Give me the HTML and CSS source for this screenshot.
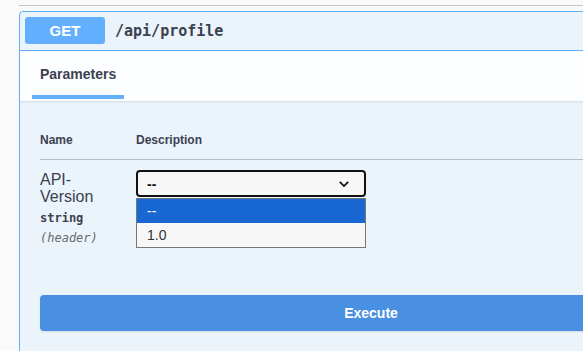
FILE: index.html
```html
<!DOCTYPE html>
<html lang="en">

<head>
    <meta charset="UTF-8">
    <meta name="viewport" content="width=device-width, initial-scale=1.0">
    <title>Profile API</title>
    <link rel="stylesheet" href="styles.css">
</head>

<body>
    <div class="top-rule"></div>

    <div class="opblock">
        <div class="opblock-summary">
            <span class="method">GET</span>
            <span class="path">/api/profile</span>
        </div>

        <div class="section-header">
            <div class="tab">Parameters</div>
        </div>

        <div class="section-body">
            <div class="param-table">
                <div class="param-head">
                    <div class="col-name">Name</div>
                    <div class="col-desc">Description</div>
                </div>
                <div class="param-row">
                    <div class="col-name">
                        <div class="param-name">API-<br>Version</div>
                        <div class="param-type">string</div>
                        <div class="param-in">(header)</div>
                    </div>
                    <div class="col-desc">
                        <div class="select-wrap">
                            <div class="select">
                                <span>--</span>
                                <svg class="chevron" width="12" height="8" viewBox="0 0 12 8">
                                    <path d="M1.8 1.8 L6 6 L10.2 1.8" fill="none" stroke="#111" stroke-width="1.7" />
                                </svg>
                            </div>
                            <!-- open option list -->
                            <ul class="options">
                                <li class="selected">--</li>
                                <li>1.0</li>
                            </ul>
                        </div>
                    </div>
                </div>
            </div>

            <div class="execute-wrapper">
                <button class="btn-execute">Execute</button>
            </div>
        </div>
    </div>
</body>

</html>
```

FILE: styles.css
```css
html,
body {
    margin: 0;
    overflow: hidden;
}

body {
    background-color: #fafafa;
    font-family: "Liberation Sans", Arial, sans-serif;
    color: #3b4151;
}

.top-rule {
    margin-left: 19px;
    height: 5px;
    border-bottom: 1px solid #c4c4c4;
}

.opblock {
    margin: 5px 0 0 19px;
    width: 702px;
    border: 1px solid #61affe;
    border-radius: 4px;
    background-color: #ebf3fb;
}

.opblock-summary {
    display: flex;
    align-items: center;
    padding: 5px 5px 6px;
    border-bottom: 1px solid #61affe;
}

.method {
    width: 80px;
    height: 27px;
    line-height: 27px;
    text-align: center;
    background-color: #61affe;
    color: #fff;
    font-size: 15px;
    font-weight: 700;
    border-radius: 3px;
}

.path {
    margin-left: 10px;
    font-family: "DejaVu Sans Mono", monospace;
    font-size: 15px;
    font-weight: 700;
}

.section-header {
    height: 50px;
    background-color: rgba(255, 255, 255, 0.85);
    box-shadow: 0 1px 2px rgba(0, 0, 0, 0.1);
}

.tab {
    margin-left: 12px;
    width: 84px;
    height: 29px;
    padding: 15px 0 0 8px;
    line-height: 17px;
    font-size: 14px;
    font-weight: 700;
    border-bottom: 4px solid #61affe;
}

.section-body {
    padding: 20px 20px 40px;
}

.param-head,
.param-row {
    display: flex;
}

.col-name {
    width: 96px;
    flex-shrink: 0;
}

.col-desc {
    flex: 1;
}

.param-head {
    padding: 12px 0 12px;
    font-size: 12px;
    line-height: 14px;
    font-weight: 700;
    border-bottom: 1px solid rgba(59, 65, 81, 0.3);
}

.param-row {
    padding-top: 10px;
}

.param-name {
    margin-top: 1px;
    font-size: 16px;
    line-height: 17px;
}

.param-type {
    padding-top: 6px;
    font-family: "DejaVu Sans Mono", monospace;
    font-size: 12px;
    font-weight: 700;
    line-height: 14px;
}

.param-in {
    padding-top: 6px;
    font-family: "DejaVu Sans Mono", monospace;
    font-size: 12px;
    font-style: italic;
    line-height: 14px;
    color: #6b6b6b;
}

.select-wrap {
    position: relative;
    width: 230px;
}

.select {
    display: flex;
    align-items: center;
    justify-content: space-between;
    height: 23px;
    padding: 0 14px 0 9px;
    border: 2px solid #111;
    border-radius: 4px;
    background-color: #f7f7f7;
    font-size: 14px;
    font-weight: 700;
    color: #111;
}

.options {
    position: absolute;
    top: 28px;
    left: 0;
    right: 0;
    margin: 0;
    padding: 0;
    list-style-type: none;
    border: 1px solid #767676;
    background-color: #f7f7f7;
    font-size: 14px;
    color: #333;
}

.options li {
    height: 24px;
    line-height: 24px;
    padding-left: 10px;
}

.options li.selected {
    background-color: #1967d2;
    color: #fff;
}

.execute-wrapper {
    padding-top: 50px;
}

.btn-execute {
    display: block;
    width: 100%;
    height: 36px;
    border: none;
    border-radius: 4px;
    background-color: #4990e2;
    color: #fff;
    font-family: "Liberation Sans", Arial, sans-serif;
    font-size: 14px;
    font-weight: 700;
    box-shadow: 0 1px 2px rgba(0, 0, 0, 0.1);
}
```
